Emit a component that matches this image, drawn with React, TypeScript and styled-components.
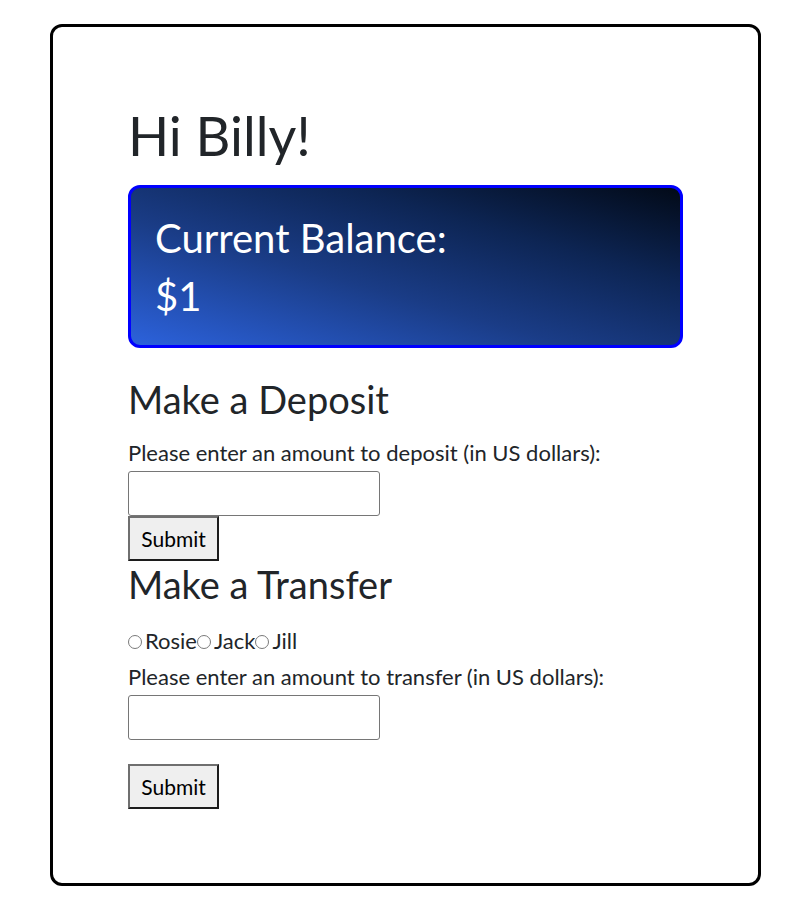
import React from "react";
import styled, { createGlobalStyle } from "styled-components";

const Global = createGlobalStyle`
  html, body { margin: 0; padding: 0; background: #fff; }
  body { font-family: Lato, "Noto Sans", sans-serif; color: #212529; }
`;

const Card = styled.div`
  box-sizing: border-box;
  margin: 24px 0 0 50px;
  width: 711px;
  height: 862px;
  border: 3px solid #000;
  border-radius: 12px;
  padding: 77px 0 0 75px;
`;

const Greeting = styled.h1`
  margin: 0 0 17px;
  font-size: 54px;
  line-height: 64px;
  font-weight: 400;
`;

const BalanceBox = styled.div`
  box-sizing: border-box;
  width: 555px;
  height: 163px;
  border: 3px solid #0000ff;
  border-radius: 12px;
  padding: 21px 24px 0;
  background: linear-gradient(to top right, #2c62dc 0%, #1a3c86 40%, #0d2554 70%, #020a18 100%);
  color: #fff;
  font-size: 40px;
  line-height: 58px;
`;

const SectionTitle = styled.h2<{ $top: number }>`
  margin: ${(p) => p.$top}px 0 0;
  font-size: 38px;
  line-height: 44px;
  font-weight: 400;
`;

const Label = styled.div<{ $top: number }>`
  margin-top: ${(p) => p.$top}px;
  font-size: 22px;
  line-height: 24px;
`;

const AmountInput = styled.input`
  display: block;
  box-sizing: border-box;
  width: 252px;
  height: 45px;
  margin: 6px 0 0;
  border: 1px solid #767676;
  border-radius: 3px;
  background: #fff;
  font: inherit;
`;

const SubmitButton = styled.button<{ $top: number }>`
  display: block;
  box-sizing: border-box;
  width: 91px;
  height: 45px;
  margin: ${(p) => p.$top}px 0 0;
  padding: 0;
  background: #efefef;
  border-style: solid;
  border-width: 2px;
  border-color: #6f6f6f #1c1c1c #1c1c1c #6f6f6f;
  border-radius: 0;
  font-family: Lato, "Noto Sans", sans-serif;
  font-size: 21px;
  color: #000;
`;

const RadioRow = styled.div`
  margin-top: 23px;
  display: flex;
  align-items: center;
  font-size: 22px;
  line-height: 24px;
  color: #212529;
`;

const RadioLabel = styled.label`
  display: flex;
  flex: none;
  align-items: center;
`;

const Radio = styled.input`
  appearance: none;
  -webkit-appearance: none;
  flex: none;
  box-sizing: border-box;
  width: 14px;
  min-width: 14px;
  height: 14px;
  margin: 1px 3px 0 0;
  padding: 0;
  border: 1px solid #7a7a7a;
  border-radius: 50%;
  background: #fff;
`;

export default function App() {
  return (
    <>
      <Global />
      <Card>
        <Greeting>Hi Billy!</Greeting>
        <BalanceBox>
          <div>Current Balance:</div>
          <div>$1</div>
        </BalanceBox>
        <SectionTitle $top={29}>Make a Deposit</SectionTitle>
        <Label $top={20}>Please enter an amount to deposit (in US dollars):</Label>
        <AmountInput type="text" />
        <SubmitButton $top={0}>Submit</SubmitButton>
        <SectionTitle $top={1}>Make a Transfer</SectionTitle>
        <RadioRow>
          {["Rosie", "Jack", "Jill"].map((n) => (
            <RadioLabel key={n}>
              <Radio type="radio" name="recipient" value={n} />
              {n}
            </RadioLabel>
          ))}
        </RadioRow>
        <Label $top={12}>Please enter an amount to transfer (in US dollars):</Label>
        <AmountInput type="text" />
        <SubmitButton $top={24}>Submit</SubmitButton>
      </Card>
    </>
  );
}
